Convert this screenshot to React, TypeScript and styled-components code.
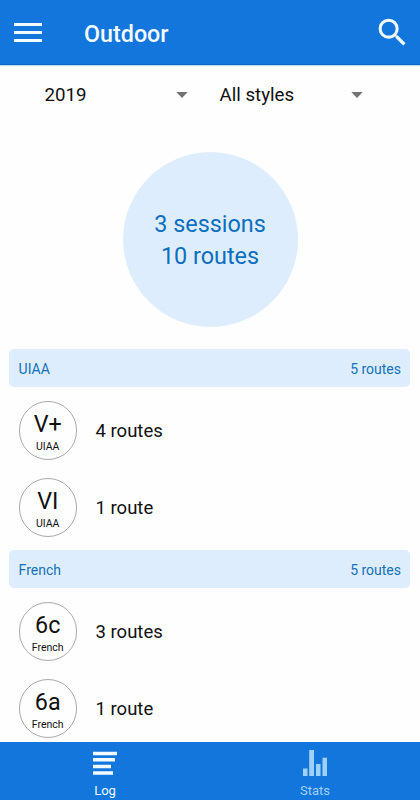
import React from "react";
import styled, { createGlobalStyle } from "styled-components";

const GlobalStyle = createGlobalStyle`
  * { box-sizing: border-box; }
  body { margin: 0; background: #fefefe; font-family: Roboto, sans-serif; color: #111; }
`;

const Screen = styled.div`
  width: 420px;
  height: 800px;
  display: flex;
  flex-direction: column;
  overflow: hidden;
`;

const TopBar = styled.header`
  height: 65px;
  flex: none;
  display: flex;
  align-items: center;
  padding: 0 9.5px 0 14px;
  background: #1376dc;
  border-bottom: 1px solid #0f68c4;
  box-shadow: 0 1px 1px #b9dcfa;
  color: #f5fcff;
`;

const Title = styled.h1`
  flex: 1;
  margin: 4px 0 0 42px;
  font-size: 23.3px;
  line-height: 28px;
  font-weight: 500;
`;

const Filters = styled.div`
  display: flex;
  height: 60px;
  flex: none;
  padding-left: 44.5px;
`;

const Select = styled.button`
  display: flex;
  align-items: center;
  justify-content: space-between;
  width: 143.5px;
  margin-right: 31.5px;
  padding: 0;
  border: 0;
  background: none;
  font: 400 18.7px/24px Roboto, sans-serif;
  color: #111;
`;

const Summary = styled.div`
  width: 175px;
  height: 175px;
  flex: none;
  margin: 26.5px auto 22.5px 122.5px;
  border-radius: 50%;
  background: #deedfe;
  color: #0c6fbd;
  display: flex;
  flex-direction: column;
  align-items: center;
  justify-content: center;
  padding-top: 3px;
  font-size: 23.4px;
  line-height: 31.5px;
`;

const List = styled.main`
  flex: 1;
  min-height: 0;
  overflow: hidden;
`;

const SectionBar = styled.div`
  height: 38px;
  margin: 0 9.6px 5px 9.2px;
  padding: 2px 9.4px 0;
  border-radius: 5px;
  background: #deedfe;
  color: #1272b8;
  display: flex;
  align-items: center;
  justify-content: space-between;
  font-size: 14px;
`;

const Rows = styled.div`
  height: 158px;
`;

const Row = styled.div`
  height: 77px;
  display: flex;
  align-items: center;
  padding-left: 18.5px;
  font-size: 18.5px;
`;

const Grade = styled.div`
  width: 58.5px;
  height: 58.5px;
  margin-right: 18.5px;
  border: 1px solid #aaa;
  border-radius: 50%;
  display: flex;
  flex-direction: column;
  align-items: center;
  padding-top: 9px;
`;

const GradeName = styled.span`
  font-size: 23.3px;
  line-height: 27px;
`;

const GradeSystem = styled.span`
  font-size: 10.5px;
  line-height: 18px;
`;

const Count = styled.span`
  padding-top: 1px;
`;

const BottomNav = styled.nav`
  height: 58px;
  flex: none;
  display: flex;
  background: #1376dc;
`;

const Tab = styled.a<{ $active?: boolean }>`
  flex: 1;
  display: flex;
  flex-direction: column;
  align-items: center;
  padding-top: 8px;
  color: ${(p) => (p.$active ? "#f2fbff" : "#9fd0f5")};
  font-size: 13px;
  line-height: 18px;

  svg { margin-bottom: 5px; }
`;

const Caret = () => (
  <svg width="12" height="6" viewBox="0 0 12 6">
    <path d="M0.3 0h11.4L6 6z" fill="#737373" />
  </svg>
);

const sections = [
  { system: "UIAA", total: "5 routes", rows: [["V+", "4 routes"], ["VI", "1 route"]] },
  { system: "French", total: "5 routes", rows: [["6c", "3 routes"], ["6a", "1 route"]] },
];

export default function App() {
  return (
    <Screen>
      <GlobalStyle />
      <TopBar>
        <svg width="28" height="19" viewBox="0 0 28 19" fill="currentColor">
          <path d="M0 0h28v3H0zM0 8h28v3H0zM0 16h28v3H0z" />
        </svg>
        <Title>Outdoor</Title>
        <svg width="37" height="37" viewBox="0 0 24 24" fill="currentColor">
          <path d="M15.5 14h-.79l-.28-.27A6.471 6.471 0 0 0 16 9.5 6.5 6.5 0 1 0 9.5 16c1.61 0 3.09-.59 4.23-1.57l.27.28v.79l5 4.99L20.49 19l-4.99-5zm-6 0C7.01 14 5 11.99 5 9.5S7.01 5 9.5 5 14 7.01 14 9.5 11.99 14 9.5 14z" />
        </svg>
      </TopBar>
      <Filters>
        <Select>2019<Caret /></Select>
        <Select>All styles<Caret /></Select>
      </Filters>
      <Summary>
        <span>3 sessions</span>
        <span>10 routes</span>
      </Summary>
      <List>
        {sections.map((s) => (
          <React.Fragment key={s.system}>
            <SectionBar>
              <span>{s.system}</span>
              <span>{s.total}</span>
            </SectionBar>
            <Rows>
              {s.rows.map(([grade, count]) => (
                <Row key={grade}>
                  <Grade>
                    <GradeName>{grade}</GradeName>
                    <GradeSystem>{s.system}</GradeSystem>
                  </Grade>
                  <Count>{count}</Count>
                </Row>
              ))}
            </Rows>
          </React.Fragment>
        ))}
      </List>
      <BottomNav>
        <Tab $active>
          <svg width="26" height="27" viewBox="0 0 26 27" fill="currentColor">
            <path d="M1 1.7h24v3.5H1zM1 8h22v3.5H1zM1 14.7h18v3.5H1zM1 21.2h20v3.5H1z" />
          </svg>
          Log
        </Tab>
        <Tab>
          <svg width="26" height="27" viewBox="0 0 26 27" fill="currentColor">
            <path d="M1 18.5h4.5V26H1zM7.2 0h4.8v26H7.2zM14 14h4.5v12H14zM20.5 7.7H25V26h-4.5z" />
          </svg>
          Stats
        </Tab>
      </BottomNav>
    </Screen>
  );
}
